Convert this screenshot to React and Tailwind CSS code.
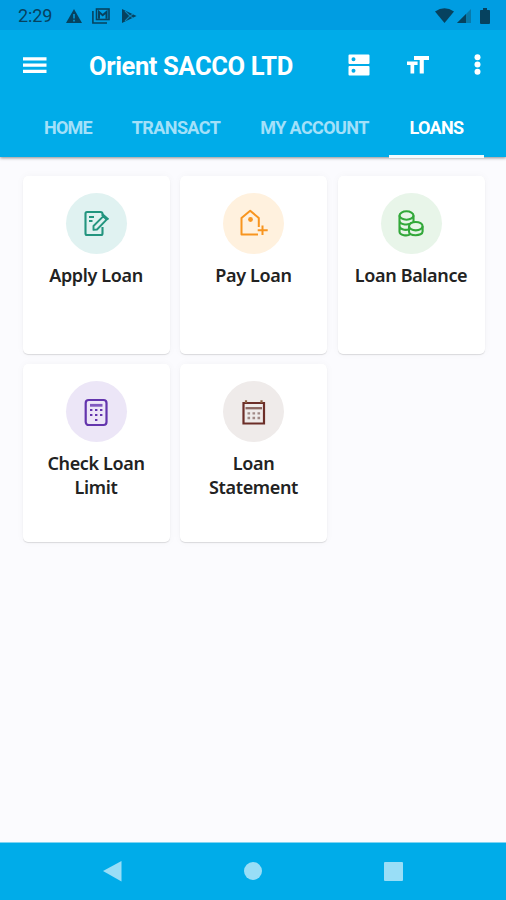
function StatusBar() {
  return (
    <div className="flex h-[30px] items-center justify-between bg-[#009de2] pl-[18px] pr-[16px] pt-px text-[#06425f]">
      <div className="flex items-center">
        <span className="w-[48px] font-[Roboto] text-[18px] leading-none tracking-[-0.1px]">2:29</span>
        <svg className="h-[14px] w-[16px]" viewBox="0 0 16 14">
          <path d="M8 0 16 14H0Z" fill="currentColor" />
          <path d="M8 5v4.500M8 10.700v1.700" stroke="#009de2" strokeWidth="1.500" />
        </svg>
        <svg className="ml-[10px] h-[16px] w-[18px]" viewBox="0 0 18 16" fill="none" stroke="currentColor">
          <path d="M.9 3V15H15" strokeWidth="1.600" />
          <rect x="4.500" y="1" width="12.500" height="10.500" strokeWidth="1.600" />
          <path d="M7 10.800V4L10.700 7.200 14.500 4V10.800" strokeWidth="2" />
        </svg>
        <svg className="ml-[12px] h-[14px] w-[15px]" viewBox="0 0 15 14">
          <path d="M0 0 14.500 7 0 14Z" fill="currentColor" />
          <path d="M3 2 8 7 3 12M8 7l3-2M8 7l3 2" fill="none" stroke="#0b86bd" strokeWidth="1.100" />
        </svg>
      </div>
      <div className="flex items-center">
        <svg className="h-[15px] w-[19px]" viewBox="0 0 19 15">
          <path d="M0 3.500Q9.500-3 19 3.500L9.500 15Z" fill="currentColor" />
        </svg>
        <svg className="ml-[3px] h-[14px] w-[14px]" viewBox="0 0 14 14">
          <path d="M14 0V14H0Z" fill="#087aab" />
          <path d="M9 5V14H0Z" fill="currentColor" />
        </svg>
        <svg className="ml-[9px] h-[16px] w-[10px]" viewBox="0 0 10 16">
          <path d="M3 0h4v2h2.200q.8 0 .8.800V15q0 1-1 1H1q-1 0-1-1V2.800Q0 2 .8 2H3Z" fill="currentColor" />
        </svg>
      </div>
    </div>
  );
}

function AppBar() {
  return (
    <div className="flex h-[70px] items-center pl-[23px] pr-[24px] text-white">
      <svg className="h-[17px] w-[24px]" viewBox="0 0 24 17" fill="currentColor">
        <path d="M0 .2h23.500v3.300H0zM0 6.500h23.500v3.300H0zM0 12.800h23.500v3.300H0z" />
      </svg>
      <h1 className="ml-[42px] w-[259px] whitespace-nowrap pt-[4px] font-[Roboto] text-[25.500px] font-bold leading-none tracking-[-0.38px]">Orient SACCO LTD</h1>
      <svg className="h-[22px] w-[22px]" viewBox="0 0 22 22">
        <path fill="currentColor" fillRule="evenodd" d="M1.500.5h19q1 0 1 1V9q0 1-1 1h-19q-1 0-1-1V1.500q0-1 1-1ZM5.500 3.300a2 2 0 1 0 0 4 2 2 0 0 0 0-4ZM1.500 12h19q1 0 1 1v7.500q0 1-1 1h-19q-1 0-1-1V13q0-1 1-1ZM5.500 14.700a2 2 0 1 0 0 4 2 2 0 0 0 0-4Z" />
      </svg>
      <svg className="ml-[37px] h-[19px] w-[22px]" viewBox="0 0 22 19">
        <path fill="currentColor" d="M7 0H22V4H16.800V17.500H12.700V4H7ZM0 5.400H10.600V9H7.200V17.500H3.500V9H0Z" />
      </svg>
      <svg className="ml-[45px] h-[22px] w-[7px]" viewBox="0 0 7 22" fill="currentColor">
        <circle cx="3.500" cy="3.300" r="3" />
        <circle cx="3.500" cy="10.600" r="3" />
        <circle cx="3.500" cy="17.800" r="3" />
      </svg>
    </div>
  );
}

function Tabs() {
  return (
    <nav className="flex h-[57px] whitespace-nowrap pl-[24px] font-[Roboto] text-[18px] font-bold leading-[56px] text-[#a3e0f9]">
      <span className="w-[88px] text-center tracking-[-0.8px]">HOME</span>
      <span className="w-[128px] text-center tracking-[-0.6px]">TRANSACT</span>
      <span className="w-[149px] text-center tracking-[-0.6px]">MY ACCOUNT</span>
      <span className="h-[58px] w-[95px] border-b-[3px] border-[#f4fbfe] text-center tracking-[-0.7px] text-white">LOANS</span>
    </nav>
  );
}

function ApplyIcon() {
  return (
    <svg className="h-[30px] w-[30px]" viewBox="0 0 30 30" fill="none" stroke="#23957f" strokeWidth="2.100">
      <path d="M21.500 8V6Q21.500 4 19.500 4H6Q4.500 4 4.500 5.500V25.500Q4.500 27 6 27H20Q21.500 27 21.500 25.500V19" />
      <path d="M8 9h5M8 13h3.500" />
      <path d="M12.500 21.800V18L22.200 8.300 25.600 11.700 16 21.500ZM21.500 6.300 27.500 11.500" strokeWidth="1.900" strokeLinejoin="round" />
    </svg>
  );
}

function PayIcon() {
  return (
    <svg className="h-[30px] w-[30px]" viewBox="0 0 30 30" fill="none" stroke="#f8951f" strokeWidth="2">
      <path d="M19 26.500H2.500V10L11.200 2.800 19.800 10V19" strokeLinejoin="round" />
      <circle cx="11.500" cy="11.500" r="2.400" fill="#f8951f" stroke="none" />
      <path d="M23.500 17.500v9.500M18.700 22.300h10" />
    </svg>
  );
}

function BalanceIcon() {
  return (
    <svg className="h-[30px] w-[30px]" viewBox="0 0 30 30" fill="none" stroke="#32a83a" strokeWidth="2.100">
      <ellipse cx="10.500" cy="7.500" rx="7" ry="4.200" />
      <path d="M3.500 7.500v16c0 4 8 5 11 2.500M17.500 7.500V14M3.500 12.500c0 4.500 9.500 5.300 12.500 2M3.500 18c0 3 5 4.500 9 3.500" />
      <ellipse cx="19.800" cy="18.200" rx="6.800" ry="4.200" fill="#e8f5e9" />
      <path d="M13 18.200v5.300c0 5 13.600 5 13.600 0V18.200" />
    </svg>
  );
}

function LimitIcon() {
  return (
    <svg className="h-[30px] w-[30px]" viewBox="0 0 30 30" fill="none" stroke="#6335ad" strokeWidth="2.200">
      <rect x="4.700" y="3" width="20.800" height="25" rx="3" />
      <path d="M9 8.300h12.500" strokeWidth="2.800" stroke="#8058bf" />
      <path d="M9 13h2.400M14 13h2.400M19 13h2.400M9 18h2.400M14 18h2.400M19 18h2.400M14 23h2.400" strokeWidth="2.200" />
    </svg>
  );
}

function StatementIcon() {
  return (
    <svg className="h-[30px] w-[30px]" viewBox="0 0 30 30" fill="none" stroke="#6c2e28" strokeWidth="2.200">
      <path d="M4.500 6H25v20.500H4.500Z" />
      <path d="M7 6V3.200M22.500 6V3.200" stroke="#8b6044" />
      <path d="M6.500 11.200h16.500" strokeWidth="2.300" stroke="#8c6761" />
      <path d="M8.500 16.300h2.600M13.500 16.300h2.600M18.500 16.300h2.600M8.500 21h2.600M13.500 21h2.600M18.500 21h2.600" strokeWidth="2.300" stroke="#a18a86" />
    </svg>
  );
}

const cards = [
  { label: "Apply Loan", tint: "bg-[#e0f2f1]", Icon: ApplyIcon },
  { label: "Pay Loan", tint: "bg-[#fff1de]", Icon: PayIcon },
  { label: "Loan Balance", tint: "bg-[#e8f5e9]", Icon: BalanceIcon },
  { label: "Check Loan Limit", tint: "bg-[#ece6f7]", Icon: LimitIcon },
  { label: "Loan Statement", tint: "bg-[#efebea]", Icon: StatementIcon },
];

export default function App() {
  return (
    <div className="flex h-[900px] w-[506px] flex-col overflow-hidden bg-[#fbfbfe] font-['Noto_Sans',sans-serif]">
      <header className="z-10 bg-[#00ace9] shadow-[0_1px_3px_rgba(0,0,0,0.45)]">
        <StatusBar />
        <AppBar />
        <Tabs />
      </header>
      <main className="grid flex-1 auto-rows-[178px] grid-cols-[147px_147px_147px] content-start gap-x-[10.500px] gap-y-[10.500px] pl-[22.500px] pt-[18.500px]">
        {cards.map(({ label, tint, Icon }) => (
          <section key={label} className="flex flex-col items-center rounded-[5px] bg-white px-[10px] pt-[17px] shadow-[0_1px_1px_rgba(0,0,0,0.12),0_0_8px_rgba(0,0,0,0.035)]">
            <div className={`flex h-[61px] w-[61px] shrink-0 items-center justify-center rounded-full ${tint}`}>
              <Icon />
            </div>
            <p className="mt-[10px] text-center text-[18px] font-semibold leading-[23.500px] tracking-[-0.35px] text-[#222]">{label}</p>
          </section>
        ))}
      </main>
      <footer className="flex h-[58px] items-center justify-between border-t border-[#7fd4f3] bg-[#00ace9] pl-[103px] pr-[103px]">
        <svg className="h-[21px] w-[19px]" viewBox="0 0 19 21"><path d="M0 10 18.500 0V20.500Z" fill="#99def7" /></svg>
        <div className="mb-px h-[18px] w-[18px] rounded-full bg-[#99def7]" />
        <div className="mb-px h-[19px] w-[19px] rounded-[1px] bg-[#99def7]" />
      </footer>
    </div>
  );
}
